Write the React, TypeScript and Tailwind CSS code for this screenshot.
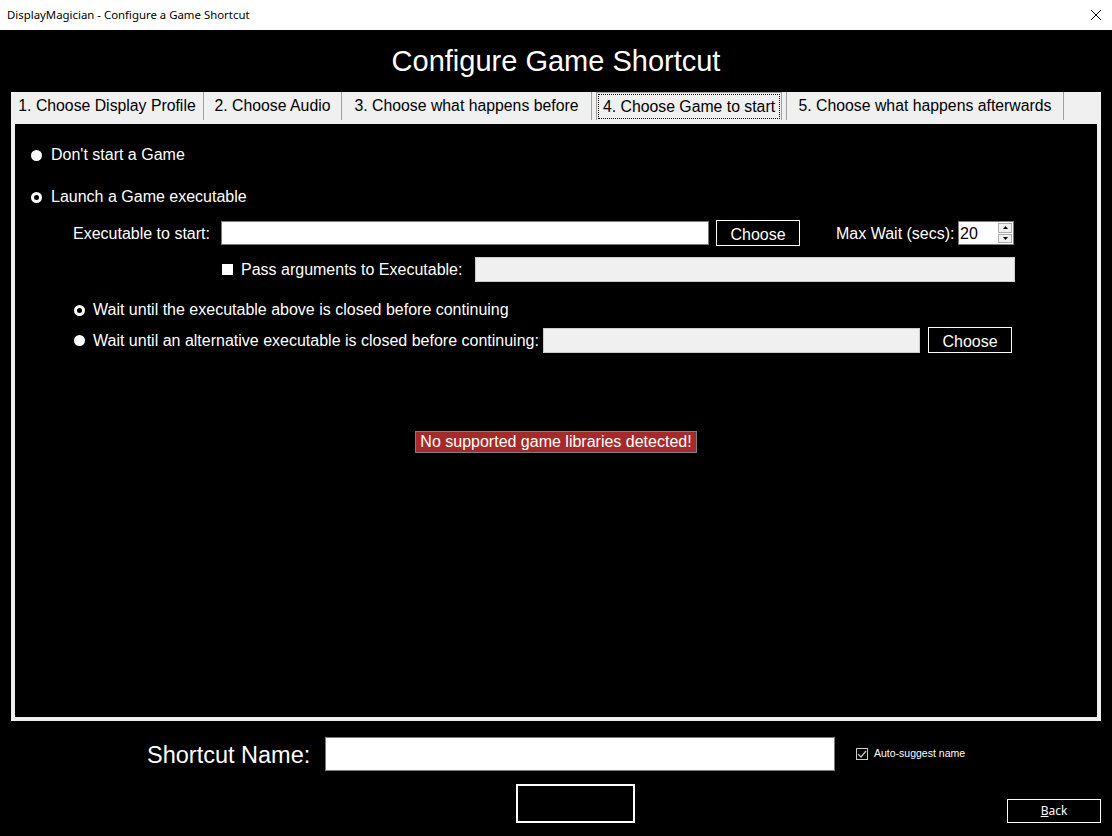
import React from 'react'

const font = { fontFamily: '"Liberation Sans", Arial, sans-serif' }

const Radio = ({ filled }: { filled?: boolean }) => (
  <span className="w-[11px] h-[11px] rounded-full bg-white flex items-center justify-center shrink-0">
    {!filled && <span className="w-[5px] h-[5px] rounded-full bg-black" />}
  </span>
)

const ChooseBtn = () => (
  <button className="w-[84px] h-[26px] border border-white bg-black text-white text-[16px] pt-[2px]">Choose</button>
)

const tabs = [
  { label: '1. Choose Display Profile', w: 'w-[193px]' },
  { label: '2. Choose Audio', w: 'w-[138px]' },
  { label: '3. Choose what happens before', w: 'w-[250px]' },
]

const App = () => {
  return (
    <div className="w-[1112px] h-[836px] bg-black flex flex-col overflow-hidden text-[16px]" style={font}>
      {/* title bar */}
      <div className="h-[30px] bg-white flex items-center justify-between pl-[7px] pr-[9px]">
        <span className="text-[11.4px] text-black" style={{ fontFamily: '"Noto Sans", "Open Sans", sans-serif' }}>
          DisplayMagician - Configure a Game Shortcut
        </span>
        <svg width="12" height="12" viewBox="0 0 12 12" className="mr-[1px]">
          <path d="M1 1 L11 11 M11 1 L1 11" stroke="#000" strokeWidth="1" />
        </svg>
      </div>

      <div className="h-[62px] pt-[2px] flex items-center justify-center text-white text-[29px]">Configure Game Shortcut</div>

      {/* tab strip */}
      <div className="ml-[11px] w-[1090px] h-[28px] bg-[#f0f0f0] flex text-black text-[15.8px]">
        {tabs.map((t) => (
          <div key={t.label} className={`${t.w} h-[28px] flex items-center justify-center border-r border-[#a0a0a0]`}>
            {t.label}
          </div>
        ))}
        <div className="ml-[4px] w-[186px] h-[28px] border-x border-t border-[#a0a0a0] bg-[#f0f0f0] p-[1px]">
          <div className="w-full h-full border border-dotted border-black flex items-center justify-center">
            4. Choose Game to start
          </div>
        </div>
        <div className="ml-[4px] w-[278px] h-[28px] flex items-center justify-center border-x border-[#a0a0a0]">
          5. Choose what happens afterwards
        </div>
      </div>

      {/* panel */}
      <div className="ml-[11px] w-[1090px] h-[601px] border-4 border-[#f0f0f0] flex flex-col text-white">
        <div className="mt-[21px] h-[20px] pl-[16px] flex items-center gap-[9px]">
          <Radio filled />
          <span>Don't start a Game</span>
        </div>
        <div className="mt-[22px] h-[20px] pl-[16px] flex items-center gap-[9px]">
          <Radio />
          <span>Launch a Game executable</span>
        </div>

        <div className="mt-[13px] h-[26px] pl-[58px] flex items-center">
          <span className="w-[148px] pt-[1px]">Executable to start:</span>
          <div className="w-[488px] h-[24px] bg-white border border-[#7a7a7a]" />
          <div className="ml-[7px]">
            <ChooseBtn />
          </div>
          <span className="ml-[36px] w-[122px] pt-[1px]">Max Wait (secs):</span>
          <div className="w-[56px] h-[24px] bg-white border border-[#7a7a7a] flex items-center text-black">
            <span className="pl-[1px] pt-[1px] flex-1">20</span>
            <div className="w-[15px] h-[22px] flex flex-col gap-[1px] pr-[1px] py-[1px]">
              <div className="flex-1 bg-[#f0f0f0] border border-[#adadad] flex items-center justify-center">
                <svg width="5" height="3" viewBox="0 0 5 3"><path d="M2.5 0 L5 3 L0 3 Z" fill="#000" /></svg>
              </div>
              <div className="flex-1 bg-[#f0f0f0] border border-[#adadad] flex items-center justify-center">
                <svg width="5" height="3" viewBox="0 0 5 3"><path d="M0 0 L5 0 L2.5 3 Z" fill="#000" /></svg>
              </div>
            </div>
          </div>
        </div>

        <div className="mt-[11px] h-[25px] pl-[207px] flex items-center">
          <span className="w-[11px] h-[11px] bg-white shrink-0" />
          <span className="ml-[8px] w-[234px]">Pass arguments to Executable:</span>
          <div className="w-[540px] h-[25px] bg-[#f0f0f0] border border-[#cccccc]" />
        </div>

        <div className="mt-[18px] h-[20px] pl-[59px] flex items-center gap-[8px]">
          <Radio />
          <span>Wait until the executable above is closed before continuing</span>
        </div>

        <div className="mt-[7px] h-[26px] pl-[59px] flex items-center">
          <Radio filled />
          <span className="ml-[8px] w-[450px] pt-[2px]">Wait until an alternative executable is closed before continuing:</span>
          <div className="w-[377px] h-[25px] bg-[#f0f0f0] border border-[#cccccc]" />
          <div className="ml-[8px]">
            <ChooseBtn />
          </div>
        </div>

        <div className="mt-[78px] flex justify-center">
          <div className="h-[22px] px-[4px] bg-[#a52a2a] border border-[#808080] flex items-center text-white">
            No supported game libraries detected!
          </div>
        </div>
      </div>

      {/* shortcut name */}
      <div className="mt-[16px] h-[34px] flex items-center">
        <span className="ml-[147px] w-[178px] pt-[4px] text-[23.5px] text-white">Shortcut Name:</span>
        <div className="w-[510px] h-[34px] bg-white border border-[#7a7a7a]" />
        <span className="ml-[21px] w-[12px] h-[12px] border border-[#cccccc] bg-black flex items-center justify-center">
          <svg width="10" height="8" viewBox="0 0 10 8"><path d="M1 4 L4 7 L9 1" stroke="#cccccc" strokeWidth="1.2" fill="none" /></svg>
        </span>
        <span className="ml-[6px] text-[10.5px] text-white">Auto-suggest name</span>
      </div>

      <div className="mt-[13px] h-[39px] flex items-end">
        <div className="ml-[516px] w-[119px] h-[39px] border-2 border-white bg-black" />
        <button
          className="ml-[372px] w-[94px] h-[24px] border border-white bg-black text-white text-[12px]"
          style={{ fontFamily: '"Noto Sans", "Open Sans", sans-serif' }}
        >
          <span className="underline">B</span>ack
        </button>
      </div>
    </div>
  )
}

export default App
